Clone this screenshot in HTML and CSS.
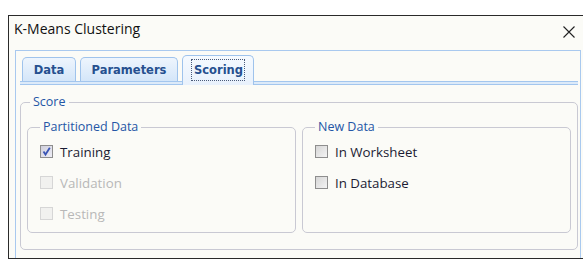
FILE: index.html
```html
<!DOCTYPE html>
<html>
<head>
<meta charset="utf-8">
<link rel="stylesheet" href="styles.css">
</head>
<body>
<div class="window">
  <div class="titlebar">
    <span class="title">K-Means Clustering</span>
    <svg class="close" width="12" height="12" viewBox="0 0 12 12"><path d="M0.5 0.5 L11.5 11.5 M11.5 0.5 L0.5 11.5" stroke="#222" stroke-width="1.1" fill="none"/></svg>
  </div>
  <div class="frame">
    <div class="tabbar">
      <div class="tab tab-data">Data</div>
      <div class="tab tab-params">Parameters</div>
      <div class="tab tab-active"><span class="focus">Scoring</span></div>
    </div>
    <div class="strip"></div>
    <fieldset class="group score">
      <legend>Score</legend>
      <div class="cols">
        <fieldset class="group sub">
          <legend>Partitioned Data</legend>
          <div class="row"><span class="cb checked"><svg width="11" height="11" viewBox="0 0 11 11"><path d="M2.5 5.5 L4.5 8.5 L8.8 1.8" stroke="#3a55b5" stroke-width="1.8" fill="none"/></svg></span><span class="lbl">Training</span></div>
          <div class="row disabled"><span class="cb"></span><span class="lbl">Validation</span></div>
          <div class="row disabled"><span class="cb"></span><span class="lbl">Testing</span></div>
        </fieldset>
        <fieldset class="group sub">
          <legend>New Data</legend>
          <div class="row"><span class="cb"></span><span class="lbl">In Worksheet</span></div>
          <div class="row"><span class="cb"></span><span class="lbl">In Database</span></div>
        </fieldset>
      </div>
    </fieldset>
  </div>
</div>
</body>
</html>
```
FILE: styles.css
```css
html, body {
  margin: 0;
  padding: 0;
  background: #ffffff;
}
body {
  font-family: "Open Sans", "Noto Sans", sans-serif;
}
.window {
  margin: 15px 0 0 8px;
  border: 1px solid #2a2a2a;
  border-right: none;
  height: 242px;
  background: #fbfbf7;
  display: flex;
  flex-direction: column;
}
.titlebar {
  height: 34px;
  box-sizing: border-box;
  display: flex;
  justify-content: space-between;
  align-items: flex-start;
  padding: 4px 8px 0 5px;
}
.title {
  font-size: 14px;
  line-height: 18px;
  color: #111;
}
.close {
  margin-top: 6px;
}
.frame {
  flex: 1;
  margin: 0 2px 0 6px;
  border: 1px solid #a9c9ef;
  border-bottom: none;
  padding: 4px 2px 0 4px;
  display: flex;
  flex-direction: column;
}
.tabbar {
  display: flex;
  align-items: flex-end;
  gap: 4px;
  padding-left: 2px;
  height: 26px;
  position: relative;
  z-index: 1;
}
.tab {
  box-sizing: border-box;
  height: 24px;
  border: 1px solid #9fc3ec;
  border-bottom: none;
  border-radius: 5px 5px 0 0;
  background: linear-gradient(#eef5fd, #d4e6f9);
  font-family: "DejaVu Sans", Verdana, sans-serif;
  font-weight: bold;
  font-size: 11.5px;
  color: #26508f;
  display: flex;
  align-items: center;
  justify-content: center;
}
.tab-data {
  width: 54px;
}
.tab-params {
  width: 98px;
}
.tab-active {
  width: 72px;
  height: 30px;
  margin-bottom: -4px;
  background: linear-gradient(#f6faff, #e8f1fc);
  padding-bottom: 2px;
}
.focus {
  outline: 1px dotted #4a5a7a;
  outline-offset: 0;
  padding: 3px 1px 3px 2px;
  line-height: 14px;
}
.strip {
  height: 2px;
  border-top: 1px solid #a3c6ee;
  border-bottom: 1px solid #a3c6ee;
  background: #dceaf9;
}
.group {
  margin: 0;
  border: 1px solid #c9c9d3;
  border-radius: 5px;
  min-width: 0;
}
.group legend {
  font-size: 12.5px;
  line-height: 18px;
  color: #2556a6;
  padding: 0 3px;
}
.score {
  margin-top: 8px;
  padding: 0 6px 16px 6px;
}
.score > legend {
  margin-left: 3px;
}
.cols {
  display: flex;
  gap: 6px;
  padding-top: 7px;
}
.sub {
  flex: 1;
  padding: 0 6px 3px 12px;
}
.sub > legend {
  margin-left: 0;
}
.row {
  height: 31px;
  display: flex;
  align-items: center;
  gap: 7px;
  font-size: 13.3px;
  color: #1b1b33;
}
.cb {
  box-sizing: border-box;
  width: 13px;
  height: 13px;
  border: 1px solid #8e8e8e;
  background: linear-gradient(135deg, #d6d6d6, #f4f4f4);
  display: flex;
  align-items: center;
  justify-content: center;
}
.cb.checked {
  background: linear-gradient(135deg, #cfcfdc, #eeeef6);
}
.row.disabled {
  color: #b8b8b8;
}
.row.disabled .cb {
  border-color: #d6d6d6;
  background: #f1f1ef;
}
```
